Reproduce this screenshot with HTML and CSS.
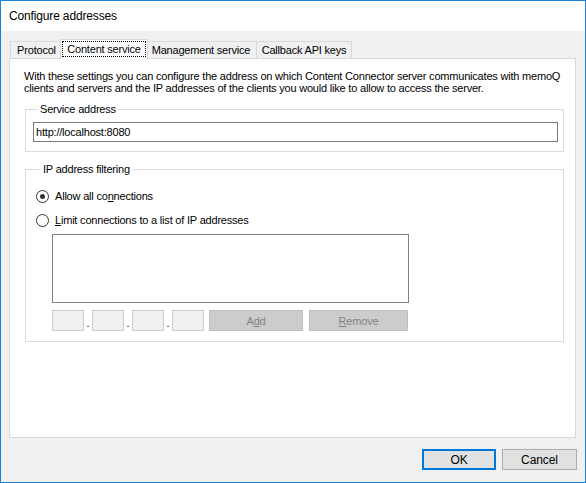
FILE: index.html
```html
<!DOCTYPE html>
<html>
<head>
<meta charset="utf-8">
<link rel="stylesheet" href="styles.css">
</head>
<body>
<div class="window">
  <div class="titlebar">Configure addresses</div>
  <div class="client">
    <div class="tabs">
      <div class="tab t-protocol">Protocol</div>
      <div class="tab t-content selected"><span class="focus">Content service</span></div>
      <div class="tab t-mgmt">Management service</div>
      <div class="tab t-callback">Callback API keys</div>
    </div>
    <div class="panel">
      <p class="desc">With these settings you can configure the address on which Content Connector server communicates with memoQ<br>clients and servers and the IP addresses of the clients you would like to allow to access the server.</p>
      <fieldset class="group group-service">
        <legend>Service address</legend>
        <div class="textbox">http://localhost:8080</div>
      </fieldset>
      <fieldset class="group group-ip">
        <legend>IP address filtering</legend>
        <div class="radio-row">
          <span class="radio checked"></span>
          <span class="radio-label">Allow all co<u>n</u>nections</span>
        </div>
        <div class="radio-row row2">
          <span class="radio"></span>
          <span class="radio-label"><u>L</u>imit connections to a list of IP addresses</span>
        </div>
        <div class="listbox"></div>
        <div class="ip-row">
          <span class="ipbox"></span><span class="dot">.</span>
          <span class="ipbox"></span><span class="dot">.</span>
          <span class="ipbox"></span><span class="dot">.</span>
          <span class="ipbox"></span>
          <span class="btn disabled btn-add">A<u>d</u>d</span>
          <span class="btn disabled btn-remove"><u>R</u>emove</span>
        </div>
      </fieldset>
    </div>
    <div class="footer">
      <span class="btn btn-ok">OK</span>
      <span class="btn btn-cancel">Cancel</span>
    </div>
  </div>
</div>
</body>
</html>
```
FILE: styles.css
```css
html, body {
  margin: 0;
  padding: 0;
  background: #ffffff;
}
body {
  font-family: "Liberation Sans", Arial, sans-serif;
  font-size: 11px;
  letter-spacing: -0.2px;
  color: #000;
}
.window {
  width: 586px;
  height: 483px;
  box-sizing: border-box;
  border: 1px solid #1883d7;
  display: flex;
  flex-direction: column;
  overflow: hidden;
}
.titlebar {
  height: 30px;
  line-height: 30px;
  font-size: 12px;
  letter-spacing: -0.15px;
  padding-left: 8px;
  background: #ffffff;
  color: #000;
}
.client {
  flex: 1;
  background: #f0f0f0;
  display: flex;
  flex-direction: column;
}
.tabs {
  display: flex;
  align-items: flex-end;
  height: 19px;
  margin-top: 8px;
  padding-left: 9px;
  position: relative;
  z-index: 2;
}
.tab {
  box-sizing: border-box;
  height: 17px;
  line-height: 16px;
  border: 1px solid #d9d9d9;
  border-bottom: none;
  background: #f0f0f0;
  text-align: center;
  margin-right: -1px;
  white-space: nowrap;
}
.t-protocol { width: 53px; }
.t-content { width: 84px; }
.t-mgmt { width: 112px; }
.t-callback { width: 96px; }
.tab.selected {
  height: 20px;
  width: 88px;
  margin-left: -2px;
  margin-right: -3px;
  margin-bottom: -1px;
  background: #ffffff;
  position: relative;
  z-index: 3;
  padding: 1px 1px 0 1px;
  line-height: 14px;
}
.focus {
  display: block;
  height: 16px;
  line-height: 14px;
  box-sizing: border-box;
  border: 1px dotted #000;
}
.panel {
  position: relative;
  z-index: 1;
  box-sizing: border-box;
  height: 380px;
  margin: 0 9px 0 8px;
  background: #ffffff;
  border: 1px solid #d9d9d9;
  padding: 11px 11px 0 14px;
}
.desc {
  margin: 0;
  line-height: 12px;
  white-space: nowrap;
}
.group {
  margin: 9px 0 0 1px;
  border: 1px solid #dcdcdc;
  min-width: 0;
}
.group legend {
  padding: 0 2px;
  margin-left: 5px;
  line-height: 13px;
  height: 13px;
}
.group-service {
  padding: 6px 5px 9px 7px;
}
.textbox {
  box-sizing: border-box;
  height: 20px;
  line-height: 18px;
  border: 1px solid #7a7a7a;
  padding-left: 2px;
  background: #fff;
}
.group-ip {
  margin-top: 11px;
  padding: 12px 5px 10px 10px;
}
.radio-row {
  display: flex;
  align-items: center;
  height: 16px;
}
.radio-row.row2 {
  margin-top: 8px;
}
.radio {
  box-sizing: border-box;
  width: 13px;
  height: 13px;
  border: 1px solid #333333;
  border-radius: 50%;
  background: #fff;
  display: flex;
  align-items: center;
  justify-content: center;
  margin-right: 6px;
}
.radio.checked::after {
  content: "";
  width: 5px;
  height: 5px;
  border-radius: 50%;
  background: #333333;
}
.listbox {
  box-sizing: border-box;
  width: 357px;
  height: 69px;
  margin: 6px 0 0 16px;
  border: 1px solid #828282;
  background: #fff;
}
.ip-row {
  display: flex;
  align-items: stretch;
  height: 21px;
  margin: 7px 0 0 16px;
}
.ipbox {
  box-sizing: border-box;
  width: 32px;
  border: 1px solid #cccccc;
  background: #f0f0f0;
}
.dot {
  width: 8px;
  text-align: center;
  line-height: 27px;
  font-size: 11px;
  color: #000;
}
.btn {
  box-sizing: border-box;
  display: flex;
  align-items: center;
  justify-content: center;
  background: #e1e1e1;
  border: 1px solid #adadad;
}
.btn.disabled {
  background: #cccccc;
  border-color: #bfbfbf;
  color: #838383;
}
.btn-add {
  width: 94px;
  margin-left: 5px;
}
.btn-remove {
  width: 99px;
  margin-left: 6px;
}
.footer {
  display: flex;
  justify-content: flex-end;
  gap: 6px;
  margin-top: 11px;
  padding-right: 8px;
}
.footer .btn {
  height: 21px;
  font-size: 12px;
  letter-spacing: -0.1px;
}
.btn-ok {
  width: 74px;
  border: 2px solid #0078d7;
}
.btn-cancel {
  width: 75px;
}
u {
  text-decoration: underline;
  text-underline-offset: 1px;
}
```
